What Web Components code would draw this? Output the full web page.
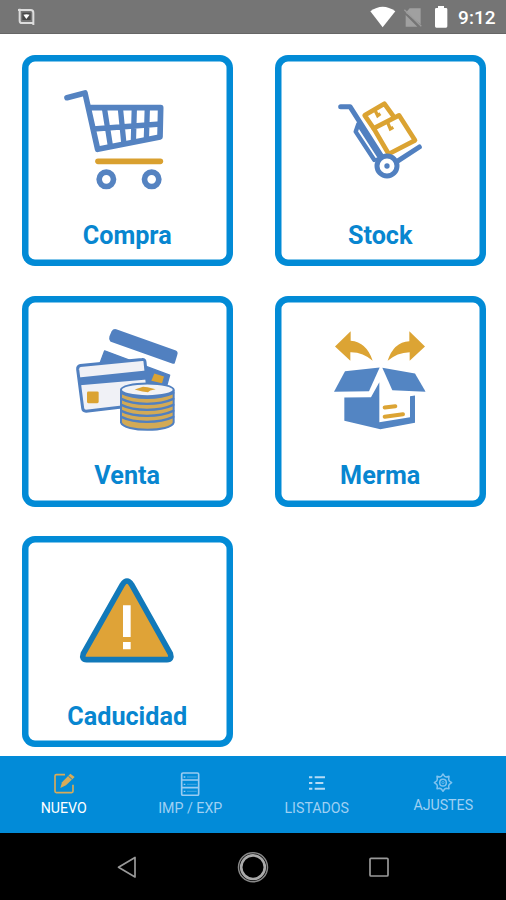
<!DOCTYPE html>
<html lang="es">
<head>
<meta charset="utf-8">
<title>Nuevo</title>
<style>
html,body{margin:0;height:100%}
body{font-family:Roboto,"Liberation Sans",sans-serif;background:#fff;overflow:hidden}
</style>
</head>
<body>
<inventory-app></inventory-app>
<script>
const ICONS = {
compra: `<svg viewBox="40 35 594 465" fill="none" stroke="#5583c1" stroke-width="17" stroke-linecap="round" stroke-linejoin="round">
<path d="M157 142L211 128L249 297L436 260L438 172L224 172"/>
<path stroke-width="16" stroke-linecap="butt" d="M236 236L437 221M269 172L288 292M317 172L328 283M359 172L356 278M398 172L395 270"/>
<path stroke="#d9a02f" d="M250 333H437"/>
<g stroke-width="17"><circle cx="275" cy="387" r="21.500"/><circle cx="411" cy="387" r="21.500"/></g></svg>`,
stock: `<svg viewBox="34 35 594 465" fill="none" stroke="#5180c0" stroke-width="14" stroke-linecap="round" stroke-linejoin="round">
<g stroke="#dba332"><path d="M312 234L285 195L344 160L370 196"/><path d="M312 234L388 195L436 270L357 311Z"/>
<path stroke-width="10" stroke-linecap="butt" stroke-linejoin="miter" d="M316 180L324 196L332 190M354 217L362 236L371 231"/></g>
<path stroke-width="15" d="M213 169H241L336 318"/><path stroke-width="13" d="M266 221L258 244L314 329"/><path stroke-width="11" d="M269 228L329 321"/>
<path stroke-width="15" d="M386 331L449 290"/><path stroke-width="9" d="M314 329L326 325"/>
<circle cx="352" cy="347" r="30" stroke-width="15"/><circle cx="352" cy="347" r="8" fill="#5180c0" stroke="none"/></svg>`,
venta: `<svg viewBox="40 36.500 594 465" stroke-linejoin="round" stroke-linecap="round">
<path fill="#5180c0" stroke="#5180c0" stroke-width="10" d="M303 123L482 187Q485 189 483 194L476 217L290 151Q287 148 289 141L295 127Q298 122 303 123Z"/>
<path fill="#5180c0" stroke="#5180c0" stroke-width="4" d="M270 183L465 256L456 288L330 290L256 220Z"/>
<path fill="#dba332" d="M419 251L448 260L442 280L410 273Z"/>
<path fill="#f0f1f6" stroke="#5180c0" stroke-width="9" d="M197 227L382 209Q390 208 391 216L404 342L214 364Q205 364 204 355L189 239Q188 229 197 227Z"/>
<path fill="#5180c0" d="M192 263L394 242L397 269L196 286Z"/>
<rect x="217" y="305" width="35" height="35" rx="4" fill="#dba332"/>
<path fill="#d3aa55" stroke="#5180c0" stroke-width="6" d="M319 302V398C327 427 470 427 477 398V302Z"/>
<g fill="none" stroke="#5180c0" stroke-width="7"><path d="M320 309Q350 324 397 324T476 309M320 327Q350 342 397 342T476 327M320 345Q350 360 397 360T476 345M320 363Q350 378 397 378T476 363M320 381Q350 396 397 396T476 381"/></g>
<ellipse cx="398" cy="300" rx="79" ry="19" fill="#f2f3f6" stroke="#5180c0" stroke-width="6"/>
<path fill="#dba332" d="M360 299L385 291L399 292L423 298L407 302L400 307L383 305Z"/></svg>`,
merma: `<svg viewBox="34 36.500 594 465">
<g fill="#dca434"><path d="M196 170L243 124V153Q291 157 309 213Q280 186 242 187V213Z"/><path d="M466 170L419 124V154Q371 157 354 213Q382 188 420 187V213Z"/></g>
<g fill="#5385c3"><path d="M226 244L330 233L298 304L193 306Z"/><path d="M338 234L436 251L468 306L368 301Z"/>
<path d="M224 323L304 322L329 277V397L421 382V319L436 317V399L332 418L224 393Z"/></g>
<g stroke="#dca434" stroke-width="12" stroke-linecap="round" fill="none"><path d="M345 353L377 349M345 381L400 373"/></g></svg>`,
caducidad: `<svg viewBox="40 38 594 465"><path d="M323 163Q337 141 351 163L467 370Q473 388 457 388H216Q200 388 206 370Z" fill="#dfa337" stroke="#1279b9" stroke-width="17" stroke-linejoin="round"/>
<path fill="#fff" d="M325 225H348V320H325ZM325 335H348V357H325Z"/></svg>`,
nuevo: `<svg viewBox="0 0 66 70" width="22" height="23.300" fill="none" stroke="#d7ab59" stroke-width="5"><path d="M36 8H10Q6 8 6 12V58Q6 62 10 62H56Q60 62 60 58V38"/><path fill="#d7ab59" stroke="none" d="M22 48L27 31L52 5L65 15L39 40Z"/><path stroke="#028bd8" stroke-width="3" d="M46 12L57 22"/></svg>`,
impexp: `<svg viewBox="0 0 66 74" width="22" height="24.700" fill="none" stroke="#9accf1" stroke-width="5"><rect x="8" y="3" width="51" height="67" rx="4"/><path d="M8 24H59M8 47H59"/><path stroke-width="4" d="M14 15H19M14 37H19M14 58H19"/><path stroke-width="4" d="M24 15H53M24 37H53M24 58H53" opacity=".35"/></svg>`,
listados: `<svg viewBox="0 0 66 70" width="22" height="23.300" stroke="#b5dbf5" stroke-width="6"><path d="M9 16H19M9 33H19M9 50H19M26 16H57M28 33H52M26 50H57"/></svg>`,
ajustes: `<svg viewBox="0 0 66 70" width="22" height="23.300" fill="none" stroke="#80c3ef" stroke-width="4.500" stroke-linejoin="round"><path transform="translate(0 -5)" d="M28 18L33 11L38 18L43 20L51 18L50 27L52 32L59 37L52 42L50 47L51 55L43 54L38 56L33 63L28 56L23 54L15 55L16 47L14 42L7 37L14 32L16 27L15 18L23 20Z"/><circle cx="33" cy="32" r="10"/><circle cx="33" cy="32" r="3.500" stroke-width="2"/></svg>`
};

const define = (name, render) => customElements.define(name, class extends HTMLElement {
  connectedCallback() {
    if (!this.shadowRoot) this.attachShadow({mode: 'open'}).innerHTML = render(this);
  }
});

define('status-bar', () => `<style>
:host{display:flex;box-sizing:border-box;height:34px;background:#757575;border-bottom:1px solid #666;align-items:center;justify-content:space-between;padding:0 10.500px 0 18px;color:#fff;font-size:19px;font-weight:500}
div{display:flex;align-items:center}svg{display:block}span{line-height:22px;padding-top:3px;margin-left:4px}
</style>
<svg width="17" height="17" viewBox="0 0 51 51"><path fill="none" stroke="#ddd" stroke-width="6" d="M0 6H38Q46 6 46 14V51M5 2V38Q5 45 12 45H48"/><rect x="13" y="14" width="25" height="22" fill="#484848"/><path fill="#fff" d="M16 20Q25 17 35 20L25 33Z"/></svg>
<div><svg width="84" height="33" viewBox="347 0 252 99"><path fill="#fff" d="M348 34Q385 7 423 34L385 82Z"/><path fill="#a0a0a0" d="M454 38L466 25H499V73ZM454 45L489 80H454Z"/><path stroke="#9b9b9b" stroke-width="4" d="M450 29L501 79"/><path fill="#fff" d="M551 18H569V24H575Q579 24 579 28V79Q579 83 575 83H546Q542 83 542 79V28Q542 24 546 24H551Z"/></svg><span>9:12</span></div>`);

define('menu-card', el => `<style>
:host{display:flex;flex-direction:column;align-items:center;box-sizing:border-box;width:211px;height:211px;padding:6.500px;box-shadow:inset 0 0 0 6.500px #028bd6;border-radius:13px;background:#fff;color:#0886d0}
svg{display:block;width:198px;height:155px;flex:none}
.label{font-weight:700;font-size:25.200px;line-height:28px;margin-top:5px}
</style>${ICONS[el.getAttribute('icon')]}<div class="label"><slot></slot></div>`);

define('tab-item', el => `<style>
:host{display:flex;flex-direction:column;align-items:center;flex:1;padding:15px 0 0 1px;color:#9fd0f3;font-size:14.200px;line-height:18px}
:host([active]){color:#fff}
:host([icon=ajustes]) span{margin-top:-1px}
.icon{height:26px;display:flex;align-items:center}svg{display:block}
span{white-space:nowrap;margin-top:2px}
</style><div class="icon">${ICONS[el.getAttribute('icon')]}</div><span><slot></slot></span>`);

define('tab-bar', () => `<style>:host{display:flex;height:77px;background:#028bd8}</style><slot></slot>`);

define('system-nav', () => `<style>:host{display:flex;box-sizing:border-box;height:67px;padding:0 63.500px;background:#000;align-items:center;justify-content:space-around}
svg{width:36px;height:36px;fill:none;stroke:#999;stroke-width:1.700;stroke-linejoin:round}</style>
<svg viewBox="0 0 36 36"><path d="M9.500 18.300L26 8.500V28Z"/></svg>
<svg viewBox="0 0 36 36"><circle cx="18" cy="18.200" r="14.500" stroke="#888" stroke-width="1.500"/><circle cx="18" cy="18.200" r="11.800" stroke="#aaa" stroke-width="2.600"/></svg>
<svg viewBox="0 0 36 36"><rect x="9" y="9.300" width="18" height="17.700" rx="1"/></svg>`);

define('inventory-app', () => `<style>
:host{display:flex;flex-direction:column;height:900px;width:506px;overflow:hidden}
main{flex:1;display:grid;grid-template-columns:211px 211px;grid-auto-rows:211px;gap:29.600px 42px;padding:21.300px 0 0 21.700px;background:#fff;min-height:0;box-sizing:border-box}
</style>
<status-bar></status-bar>
<main><menu-card icon="compra">Compra</menu-card><menu-card icon="stock">Stock</menu-card><menu-card icon="venta">Venta</menu-card><menu-card icon="merma">Merma</menu-card><menu-card icon="caducidad">Caducidad</menu-card></main>
<tab-bar><tab-item icon="nuevo" active>NUEVO</tab-item><tab-item icon="impexp">IMP / EXP</tab-item><tab-item icon="listados">LISTADOS</tab-item><tab-item icon="ajustes">AJUSTES</tab-item></tab-bar>
<system-nav></system-nav>`);
</script>
</body>
</html>
